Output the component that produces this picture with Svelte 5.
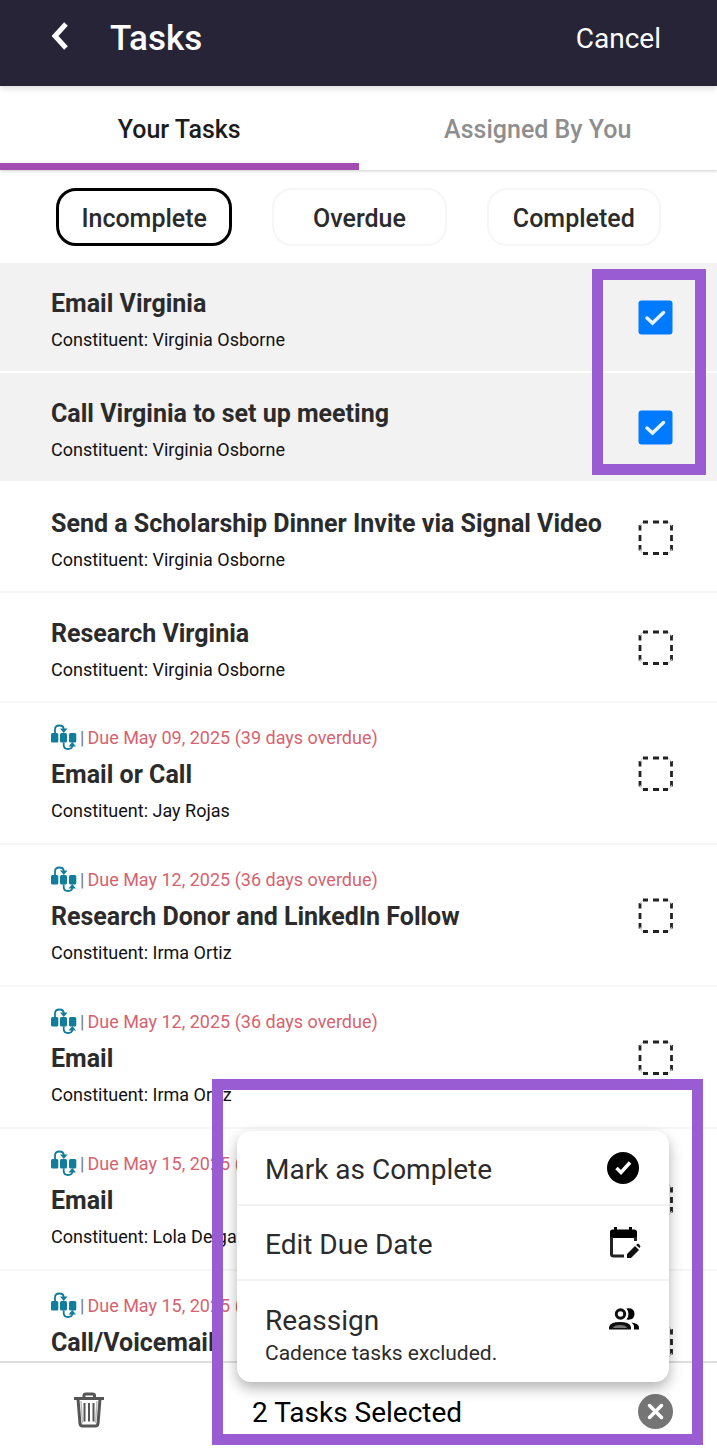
<script lang="ts">
	type Task = {
		id: number;
		title: string;
		constituent: string;
		due?: string;
		selected: boolean;
	};

	const tabs = ['Your Tasks', 'Assigned By You'];
	const filters = ['Incomplete', 'Overdue', 'Completed'];

	let activeTab = $state('Your Tasks');
	let activeFilter = $state('Incomplete');

	let tasks = $state<Task[]>([
		{ id: 1, title: 'Email Virginia', constituent: 'Virginia Osborne', selected: true },
		{ id: 2, title: 'Call Virginia to set up meeting', constituent: 'Virginia Osborne', selected: true },
		{ id: 3, title: 'Send a Scholarship Dinner Invite via Signal Video', constituent: 'Virginia Osborne', selected: false },
		{ id: 4, title: 'Research Virginia', constituent: 'Virginia Osborne', selected: false },
		{ id: 5, title: 'Email or Call', constituent: 'Jay Rojas', due: 'Due May 09, 2025 (39 days overdue)', selected: false },
		{ id: 6, title: 'Research Donor and LinkedIn Follow', constituent: 'Irma Ortiz', due: 'Due May 12, 2025 (36 days overdue)', selected: false },
		{ id: 7, title: 'Email', constituent: 'Irma Ortiz', due: 'Due May 12, 2025 (36 days overdue)', selected: false },
		{ id: 8, title: 'Email', constituent: 'Lola Delgado', due: 'Due May 15, 2025 (33 days overdue)', selected: false },
		{ id: 9, title: 'Call/Voicemail', constituent: 'Lola Delgado', due: 'Due May 15, 2025 (33 days overdue)', selected: false }
	]);

	let selectedCount = $derived(tasks.filter((t) => t.selected).length);

	function clearSelection() {
		for (const task of tasks) task.selected = false;
	}
</script>

<div class="screen">
	<header class="topbar">
		<button class="back" aria-label="Back">
			<svg width="20" height="28" viewBox="0 0 20 28" fill="none" stroke="currentColor" stroke-width="5"><polyline points="16 2 5 14 16 26" /></svg>
		</button>
		<h1>Tasks</h1>
		<button class="cancel">Cancel</button>
	</header>

	<nav class="tabs">
		{#each tabs as tab}
			<button class="tab" class:active={activeTab === tab} onclick={() => (activeTab = tab)}>{tab}</button>
		{/each}
	</nav>

	<div class="filters">
		{#each filters as filter}
			<button class="chip" class:active={activeFilter === filter} onclick={() => (activeFilter = filter)}>{filter}</button>
		{/each}
	</div>

	<main class="list-area">
		<ul class="list">
			{#each tasks as task (task.id)}
				<li class="task" class:selected={task.selected} class:has-due={task.due}>
					<div class="info">
						{#if task.due}
							<p class="due">
								<svg width="26" height="26" viewBox="0 0 26 26" fill="none">
									<g fill="#117d9b">
										<rect x="0" y="9" width="7.300" height="9.500" rx="1.500" />
										<rect x="9" y="9" width="7" height="9.500" rx="1.500" />
										<rect x="18" y="9" width="7.300" height="9.500" rx="1.500" />
										<path d="M9 4.500h7.500L12.800 9zM17.500 22.500h7.500L21.300 18z" />
									</g>
									<path d="M4 9V5.500Q4 1.500 8.300 1.500T12.700 5M12.700 18.500v2.500q0 4 4.300 4t4.300-3.500" stroke="#117d9b" stroke-width="1.800" />
								</svg>
								<span class="bar">|</span>
								<span>{task.due}</span>
							</p>
						{/if}
						<h2>{task.title}</h2>
						<p class="constituent">Constituent: {task.constituent}</p>
					</div>
					<label class="tick">
						<input type="checkbox" bind:checked={task.selected} aria-label={task.title} />
						{#if task.selected}
							<svg width="35" height="35" viewBox="0 0 35 35" fill="none">
								<rect x="0.5" y="0.5" width="34" height="34" rx="3" fill="#007aff" />
								<path d="M9 18l5.500 5L25.500 12.500" stroke="#e6f2ff" stroke-width="3.500" stroke-linecap="round" />
							</svg>
						{:else}
							<svg width="35" height="35" viewBox="0 0 35 35" fill="none" stroke="#222" stroke-width="2.800">
								<path d="M5 2h5M15 2h6M25 2h5M5 33.500h5M15 33.500h6M25 33.500h5M2 5v5.500M2 15v6M2 25v5.500M33.500 5v5.500M33.500 15v6M33.500 25v5.500" />
								<path d="M2 6q0-2 3-4M30 2q3 2 3.500 4M2 29q0 3 3 4.500M30 33.500q3-1.500 3.500-4.500" stroke="#ccc" stroke-width="1" />
							</svg>
						{/if}
					</label>
				</li>
			{/each}
		</ul>
		<div class="highlight highlight-ticks"></div>
	</main>

	<footer class="actions">
		<button class="trash" aria-label="Delete tasks">
			<svg width="32" height="36" viewBox="0 0 32 36" fill="none" stroke="#555" stroke-width="2">
				<path d="M11 5.500V3.500q0-1.500 2-1.500h6.500q2 0 2 1.500v2" stroke-width="3" />
				<path d="M1 6.500h30" stroke-width="3" />
				<path d="M5 7l2 24.500q.3 2.500 2.500 2.500h13q2.200 0 2.500-2.500L27 7" stroke-width="3" />
				<path d="M8 9l1.500 22M24 9l-1.500 22" stroke="#bbb" stroke-width="1.500" />
				<path d="M11.500 11v18.500M16 11v18.500M20.500 11v18.500" />
			</svg>
		</button>
		<span class="count">{selectedCount} Tasks Selected</span>
		<button class="clear" aria-label="Clear selection" onclick={clearSelection}>
			<svg width="35" height="35" viewBox="0 0 35 35">
				<circle cx="17.500" cy="17.500" r="17.500" fill="#757575" />
				<path d="M11.500 11.500l12 12M23.500 11.500l-12 12" stroke="#fff" stroke-width="3.500" stroke-linecap="round" />
			</svg>
		</button>

		<div class="menu">
			<button class="item">
				<span>Mark as Complete</span>
				<svg width="36" height="36" viewBox="0 0 36 36" fill="none">
					<circle cx="18" cy="18" r="16" fill="#000" />
					<path d="M11.500 18l4.500 4.500 9-10" stroke="#fff" stroke-width="3.500" />
				</svg>
			</button>
			<button class="item">
				<span>Edit Due Date</span>
				<svg width="36" height="36" viewBox="0 0 36 36" fill="none">
					<path d="M5 13V7q0-2.500 2.500-2.500H9V2h3v2.500h12V2h3v2.500h2q3 0 3 2.500v6z" fill="#000" />
					<path d="M6.500 12v17q0 2 2 2h10.500M30.500 12v4" stroke="#222" stroke-width="3" />
					<path d="M22 33v-4l8-8 4 4-8 8zM31 20l2-1.500q1 0 2.500 3L34.500 23z" fill="#111" />
				</svg>
			</button>
			<button class="item tall">
				<span>Reassign<small>Cadence tasks excluded.</small></span>
				<svg width="36" height="36" viewBox="0 0 36 36" fill="none">
					<circle cx="15.500" cy="13" r="4.200" stroke="#111" stroke-width="3" />
					<path d="M21.500 7.500q8-1 8 5.500t-8 5.500q2-2.500 2-5.500t-2-5.500z" fill="#000" />
					<path d="M4 28.500v-2.500q1-5 11-5t11 5v2.500z" fill="#111" />
					<path d="M8 27q1-3 7-3t7 3z" fill="#777" />
					<path d="M26.500 21.500q7.500 1 7.500 5v2h-5v-2.500q0-2.500-2.500-4.500z" fill="#000" />
				</svg>
			</button>
		</div>
		<div class="highlight highlight-menu"></div>
	</footer>
</div>

<style>
	:global(body) {
		background: #fff;
	}

	.screen {
		display: flex;
		flex-direction: column;
		height: 100vh;
		overflow: hidden;
		font-family: Roboto, sans-serif;
		color: #2b2b2b;
	}

	button {
		padding: 0;
		border: 0;
		background: none;
		color: inherit;
		font: inherit;
		cursor: pointer;
	}

	svg {
		display: block;
		flex: none;
	}

	h1,
	h2,
	p,
	ul {
		margin: 0;
		padding: 0;
	}

	.topbar {
		display: flex;
		align-items: center;
		flex: none;
		height: 76px;
		padding: 0 56px 10px 50px;
		background: #262436;
		color: #fff;
		box-shadow: 0 2px 6px rgba(0, 0, 0, 0.15);
		z-index: 1;
	}

	.back {
		margin: 0 40px 4px 0;
	}

	h1 {
		flex: 1;
		font-size: 35px;
		font-weight: 500;
	}

	.cancel {
		font-size: 28px;
	}

	.tabs {
		display: flex;
		flex: none;
		height: 84px;
		box-shadow: 0 1px 3px rgba(0, 0, 0, 0.2);
	}

	.tab {
		flex: 1;
		padding-top: 10px;
		border-bottom: 7px solid transparent;
		color: #8e8e8e;
		font-size: 25px;
		font-weight: 500;
	}

	.tab.active {
		border-color: #a24bb0;
		color: #1c1c1c;
	}

	.filters {
		display: flex;
		align-items: center;
		flex: none;
		gap: 40px;
		height: 93px;
		padding: 0 56px;
	}

	.chip {
		flex: 1;
		height: 58px;
		padding-top: 3px;
		border: 2px solid #f6f6f6;
		border-radius: 20px;
		font-size: 25px;
		font-weight: 500;
	}

	.chip.active {
		border: 3px solid #000;
	}

	.list-area {
		position: relative;
		flex: 1;
		min-height: 0;
	}

	.list {
		height: 100%;
		overflow: hidden;
		list-style: none;
	}

	.task {
		display: flex;
		align-items: center;
		box-sizing: border-box;
		height: 110px;
		padding: 0 44px 0 51px;
		border-bottom: 2px solid #f6f6f6;
	}

	.task.selected {
		border-color: #fff;
		background: #f2f2f2;
		background-clip: padding-box;
	}

	.task.has-due {
		height: 142px;
	}

	.info {
		flex: 1;
		min-width: 0;
		padding-top: 6px;
		white-space: nowrap;
	}

	.has-due .info {
		padding-top: 2px;
	}

	.due {
		display: flex;
		align-items: center;
		gap: 3px;
		height: 32px;
		padding-bottom: 2px;
		color: #d5636f;
		font-size: 18px;
	}

	.bar {
		color: #777;
	}

	h2 {
		font-size: 25px;
		font-weight: 700;
		line-height: 40px;
	}

	.constituent {
		color: #111;
		font-size: 18px;
		line-height: 32px;
	}

	.tick {
		display: grid;
		cursor: pointer;
	}

	.tick > :global(*) {
		grid-area: 1 / 1;
	}

	.tick input {
		width: 35px;
		height: 35px;
		margin: 0;
		opacity: 0;
		cursor: pointer;
	}

	.actions {
		position: relative;
		display: flex;
		align-items: center;
		box-sizing: border-box;
		flex: none;
		height: 91px;
		padding: 8px 44px 0 73px;
		border-top: 2px solid #ddd;
		background: #fff;
	}

	.trash {
		padding-bottom: 3px;
	}

	.count {
		flex: 1;
		padding-top: 2px;
		margin-left: 147px;
		color: #000;
		font-size: 28px;
	}

	.menu {
		position: absolute;
		right: 48px;
		bottom: 70px;
		width: 432px;
		border-radius: 14px;
		background: #fff;
		box-shadow: 0 6px 14px rgba(0, 0, 0, 0.3);
	}

	.item {
		display: flex;
		align-items: center;
		justify-content: space-between;
		box-sizing: border-box;
		width: 100%;
		height: 75px;
		padding: 0 28px;
		border-bottom: 2px solid #f3f3f3;
		font-size: 28px;
		text-align: left;
	}

	.item span {
		padding-top: 3px;
	}

	.item.tall {
		align-items: flex-start;
		height: 101px;
		padding-top: 20px;
		border-bottom: 0;
	}

	small {
		display: block;
		font-size: 21px;
		line-height: 32px;
	}

	.highlight {
		position: absolute;
		border: 11px solid #9a5cd3;
		pointer-events: none;
	}

	.highlight-ticks {
		top: 6px;
		right: 11px;
		width: 92px;
		height: 184px;
	}

	.highlight-menu {
		right: 14px;
		bottom: 7px;
		left: 212px;
		height: 344px;
	}
</style>
